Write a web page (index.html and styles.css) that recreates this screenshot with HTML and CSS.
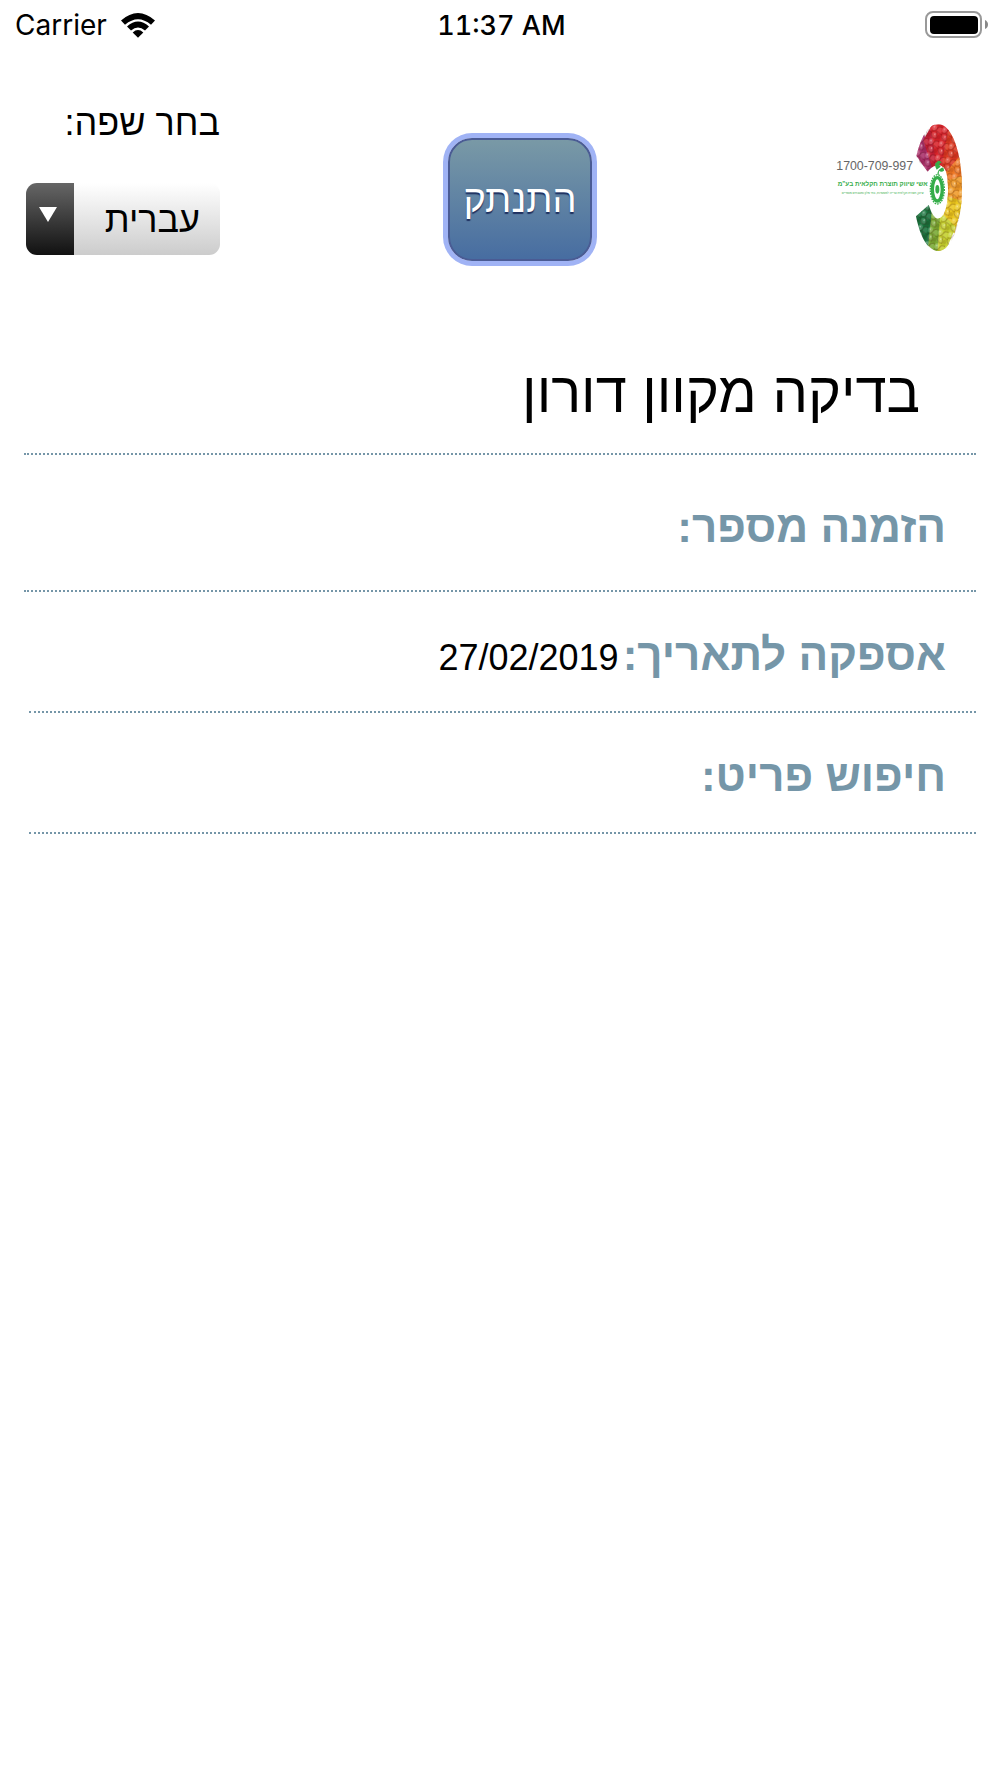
FILE: index.html
```
<!DOCTYPE html>
<html lang="he" dir="rtl">
<head>
    <meta charset="UTF-8">
    <meta name="viewport" content="width=device-width, initial-scale=1.0">
    <title>הזמנה</title>
    <link rel="stylesheet" href="styles.css">
</head>
<body>
    <div class="status-bar" dir="ltr">
        <div class="carrier">
            <span>Carrier</span>
            <svg class="wifi" viewBox="0 0 34 25" aria-hidden="true">
                <path d="M0 7.5Q17 -7.5 34 7.5L30 11.7Q17 .6 4 11.7Z"/>
                <path d="M6 13.4Q17 3.8 28 13.4L24 17.4Q17 11.6 10 17.4Z"/>
                <path d="M11.7 19.4Q17 14.8 22.3 19.4L17 24.8Z"/>
            </svg>
        </div>
        <div class="clock">11:37 AM</div>
        <div class="battery">
            <svg viewBox="0 0 63 28" aria-hidden="true">
                <rect x="1" y="1" width="55" height="25" rx="7" fill="none" stroke="#999" stroke-width="2"/>
                <rect x="5" y="5" width="48" height="18" rx="4"/>
                <path d="M60 9q3 1.500 3 4.500t-3 4.500z" fill="#888"/>
            </svg>
        </div>
    </div>

    <header class="header">
        <svg class="logo" viewBox="50 35 384 396" role="img" aria-label="1700-709-997">
            <defs>
                <clipPath id="ring">
                    <path clip-rule="evenodd" d="M357 42C398 42 428 128 428 232S398 422 357 422C326 422 303 382 290 318L328 284Q342 327 357 325C374 323 386 290 386 237S376 165 357 165Q340 165 325 184L290 144C303 82 326 42 357 42Z"/>
                </clipPath>
                <pattern id="fruit" width="31" height="43" patternUnits="userSpaceOnUse" patternTransform="rotate(14)">
                    <ellipse cx="7" cy="9" rx="7" ry="9" fill="#fff" opacity=".2"/>
                    <ellipse cx="23" cy="14" rx="7" ry="10" fill="#fff" opacity=".12"/>
                    <ellipse cx="11" cy="32" rx="8" ry="9" fill="#fff" opacity=".16"/>
                    <ellipse cx="26" cy="35" rx="5" ry="7" fill="#300" opacity=".14"/>
                    <ellipse cx="6" cy="7" rx="2" ry="3" fill="#fff" opacity=".5"/>
                    <ellipse cx="13" cy="29" rx="2" ry="3" fill="#fff" opacity=".45"/>
                    <path d="M0 19Q10 24 15 12T31 4M19 43Q21 34 17 24T31 26M1 23Q4 43 18 40" fill="none" stroke="#300" stroke-width="3" opacity=".28"/>
                </pattern>
            </defs>
            <g clip-path="url(#ring)">
                <path d="M357 232L280 120L314 70L340 165Z" fill="#a82d68"/>
                <path d="M357 232L312 90L345 30L352 165Z" fill="#c51f35"/>
                <path d="M352 170L330 30L392 35L375 170Z" fill="#d8232a"/>
                <path d="M365 180L390 40L440 130L384 185Z" fill="#dc3922"/>
                <path d="M375 190L432 125L432 210L380 220Z" fill="#ed7623"/>
                <path d="M370 215L432 195L435 284L375 265Z" fill="#ef9a28"/>
                <path d="M370 255L432 272L405 370L365 300Z" fill="#eac71d"/>
                <path d="M357 300L410 350L375 430L348 430Z" fill="#c3cf2b"/>
                <path d="M338 300L363 310L354 430L320 400Z" fill="#78a931"/>
                <path d="M280 310L340 275L326 410L290 390Z" fill="#16713b"/>
                <rect x="285" y="35" width="150" height="395" fill="url(#fruit)"/>
            </g>
            <ellipse cx="354" cy="237" rx="15" ry="35" fill="none" stroke="#35ad49" stroke-width="10"/>
            <ellipse cx="354" cy="237" rx="21" ry="44" fill="none" stroke="#35ad49" stroke-width="4" stroke-dasharray="5 3"/>
            <ellipse cx="354" cy="237" rx="6" ry="13" fill="#35ad49"/>
            <path d="M354 193Q355 178 365 174Q373 166 374 181Q366 187 359 181L358 193Z M352 178Q342 160 353 155Q357 147 367 156Q354 161 364 169Z" fill="#35ad49"/>
            <text class="logo-phone" x="166" y="178">1700-709-997</text>
            <text class="logo-name" x="190" y="228">אשי שיווק תוצרת חקלאית בע"מ</text>
            <text class="logo-note" x="190" y="252">שיווק תוצרת חקלאית טרייה למסעדות, בתי מלון ומטבחים מוסדיים</text>
        </svg>

        <button type="button" class="logout">התנתק</button>

        <div class="language">
            <label for="language">בחר שפה:</label>
            <div class="select-wrap">
                <select id="language" name="language">
                    <option value="he" selected>עברית</option>
                    <option value="en">English</option>
                </select>
            </div>
        </div>
    </header>

    <main class="order">
        <h1>בדיקה מקוון דורון</h1>
        <div class="row row-number">
            <span class="row-label">הזמנה מספר:</span>
        </div>
        <div class="row row-short">
            <span class="row-label">אספקה לתאריך:</span>
            <span class="row-value">27/02/2019</span>
        </div>
        <div class="row row-short">
            <span class="row-label">חיפוש פריט:</span>
        </div>
    </main>
</body>
</html>
```
FILE: styles.css
```
* {
    box-sizing: border-box;
}
body {
    margin: 0;
    background-color: white;
    color: black;
    font-family: "Liberation Sans", Arial, sans-serif;
}

/* status bar */
.status-bar {
    display: grid;
    grid-template-columns: 1fr auto 1fr;
    align-items: center;
    height: 50px;
    padding: 0 12px 0 15px;
    font-family: Inter, sans-serif;
    font-size: 28px;
}
.carrier {
    display: flex;
    align-items: center;
    gap: 14px;
}
.wifi {
    width: 34px;
    height: 25px;
}
.clock {
    font-size: 27px;
    font-weight: 500;
    font-variant-numeric: tabular-nums;
}
.battery {
    display: flex;
    justify-content: flex-end;
}
.battery svg {
    width: 63px;
    height: 28px;
}

/* header */
.header {
    display: flex;
    justify-content: space-between;
    align-items: flex-start;
    padding: 50px 36px 0 26px;
}
.logo {
    width: 128px;
    height: 132px;
    margin-top: 22px;
}
.logo text {
    text-anchor: middle;
    fill: #35ad49;
}
.logo .logo-phone {
    direction: ltr;
    font-size: 37px;
    fill: #666;
}
.logo-name {
    font-size: 19px;
    font-weight: bold;
}
.logo-note {
    font-size: 9px;
}
.logout {
    margin-top: 38px;
    margin-right: 16px;
    width: 144px;
    height: 123px;
    padding: 0;
    border: 2px solid #4a5b94;
    border-radius: 24px;
    background: linear-gradient(#7999a6, #476da1);
    box-shadow: 0 0 0 5px #a0b3f5;
    color: white;
    font-family: inherit;
    font-size: 38px;
    text-shadow: 0 2px 1px #1e3060;
    cursor: pointer;
}
.language {
    width: 194px;
    font-size: 36px;
}
.language label {
    display: block;
    height: 46px;
    line-height: 46px;
}
.select-wrap {
    position: relative;
    margin-top: 37px;
}
.select-wrap::after {
    content: "";
    position: absolute;
    left: 13px;
    top: 24px;
    border: 9px solid transparent;
    border-top: 15px solid white;
    border-bottom: 0;
    pointer-events: none;
}
.select-wrap select {
    display: block;
    width: 100%;
    height: 72px;
    padding: 0 20px 0 48px;
    border: 0;
    border-radius: 11px;
    appearance: none;
    background: linear-gradient(#666, #111) left / 48px 100% no-repeat, linear-gradient(#fff, #ccc);
    color: black;
    font-family: inherit;
    font-size: 36px;
}

/* order details */
.order {
    padding: 0 24px;
}
h1 {
    margin: 100px 0 0;
    padding: 0 56px 28px 0;
    border-bottom: 2px dotted #7596a8;
    font-size: 56px;
    font-weight: normal;
    line-height: 64px;
}
.row {
    display: flex;
    align-items: baseline;
    gap: 4px;
    padding: 38px 30px 31px 0;
    border-bottom: 2px dotted #7596a8;
    line-height: 50px;
}
.row-number {
    padding-top: 47px;
    padding-bottom: 38px;
}
.row-short {
    margin-left: 5px;
}
.row-label {
    color: #7596a8;
    font-size: 44px;
    font-weight: bold;
}
.row-value {
    font-size: 36px;
    line-height: 40px;
}
```
